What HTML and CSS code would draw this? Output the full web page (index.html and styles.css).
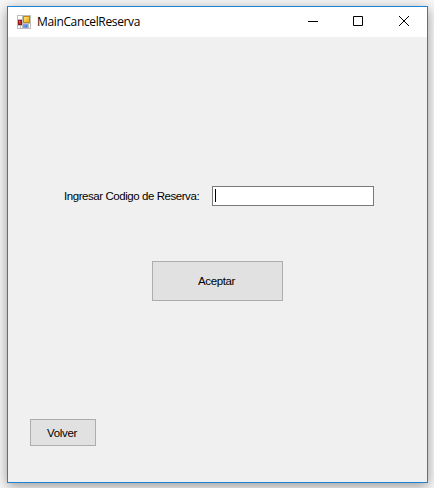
FILE: index.html
```html
<!DOCTYPE html>
<html lang="es">
<head>
<meta charset="utf-8">
<title>MainCancelReserva</title>
<link rel="stylesheet" href="styles.css">
</head>
<body>
<main class="window">
  <header class="titlebar">
    <svg class="app-icon" width="14" height="14" viewBox="0 0 14 14" shape-rendering="crispEdges" aria-hidden="true">
      <defs>
        <linearGradient id="gold" x2="1" y2="1"><stop offset="0" stop-color="#ffe58a"/><stop offset="1" stop-color="#e6a800"/></linearGradient>
        <linearGradient id="blue" x2="1" y2="1"><stop offset="0" stop-color="#86b0ff"/><stop offset="1" stop-color="#2f67d8"/></linearGradient>
      </defs>
      <path fill="#bdbdbd" d="M0 0h14v14H0z"/>
      <path fill="#fff" d="M1 1h4v3H1zM1 11h2v2H1zM4 11h1v2H4zM12 9h1v4h-1z"/>
      <path fill="#8f1616" d="M1 5h4v5H1z"/>
      <path fill="#c9301f" d="M2 6h2v3H2z"/>
      <path fill="#e88a7a" d="M2 6h1v1H2z"/>
      <path fill="#b98a14" d="M6 1h7v7H6z"/>
      <path fill="url(#gold)" d="M7 2h5v5H7z"/>
      <path fill="#7f9fe0" d="M6 9h5v4H6z"/>
      <path fill="url(#blue)" d="M7 10h3v2H7z"/>
    </svg>
    <h1 class="title">MainCancelReserva</h1>
    <div class="controls">
      <svg width="10" height="10" viewBox="0 0 10 10"><path d="M0 5.5h10"/></svg>
      <svg width="10" height="10" viewBox="0 0 10 10"><path d="M.5.5h9v9h-9z"/></svg>
      <svg class="close" width="10" height="10" viewBox="0 0 10 10"><path d="M0 0l10 10M10 0L0 10"/></svg>
    </div>
  </header>
  <form class="form">
    <div class="field">
      <label class="label">Ingresar Codigo de Reserva:</label>
      <div class="input"><span class="caret"></span></div>
    </div>
    <button class="button accept" type="button"><span>Aceptar</span></button>
    <button class="button back" type="button"><span>Volver</span></button>
  </form>
</main>
</body>
</html>
```
FILE: styles.css
```css
* { box-sizing: border-box; }
body {
  margin: 0;
  width: 434px;
  height: 488px;
  padding: 6px 0 0 7px;
  overflow: hidden;
  background: #f8f8f8;
  font-family: "Liberation Sans", sans-serif;
  color: #000;
}
.window {
  width: 421px;
  height: 477px;
  border: 1px solid #1883d7;
  background: #f0f0f0;
  box-shadow: 0 3px 12px rgba(0, 0, 0, .4);
}
.titlebar {
  display: flex;
  height: 30px;
  padding: 0 18px 0 9px;
  align-items: center;
  background: #fff;
}
.app-icon { display: block; }
.title {
  margin: 0 0 0 6px;
  font: 400 12px/16px "Open Sans", sans-serif;
  letter-spacing: -.36px;
}
.controls {
  display: flex;
  gap: 35px;
  margin: -2px 0 0 auto;
}
.controls svg {
  display: block;
  overflow: visible;
  fill: none;
  stroke: #000;
  stroke-width: 1;
}
.controls .close { margin-left: 1px; }
.form {
  display: flex;
  flex-direction: column;
  align-items: flex-start;
  padding-top: 149px;
}
.field {
  display: flex;
  align-items: center;
  margin-left: 56px;
}
.label {
  width: 148px;
  font-size: 11.5px;
  line-height: 14px;
  letter-spacing: -.44px;
  white-space: nowrap;
}
.input {
  width: 162px;
  height: 20px;
  padding: 2px;
  border: 1px solid #7a7a7a;
  background: #fff;
}
.caret {
  display: block;
  width: 1px;
  height: 13px;
  background: #000;
}
.button {
  display: flex;
  align-items: center;
  justify-content: center;
  padding: 0;
  border: 1px solid #adadad;
  background: #e1e1e1;
  color: #000;
  font: 11.5px/14px "Liberation Sans", sans-serif;
  letter-spacing: -.35px;
}
.accept {
  width: 131px;
  height: 40px;
  margin: 55px 0 0 144px;
  padding-right: 2px;
}
.back {
  width: 66px;
  height: 27px;
  margin: 118px 0 0 22px;
  padding-right: 2px;
}
```
